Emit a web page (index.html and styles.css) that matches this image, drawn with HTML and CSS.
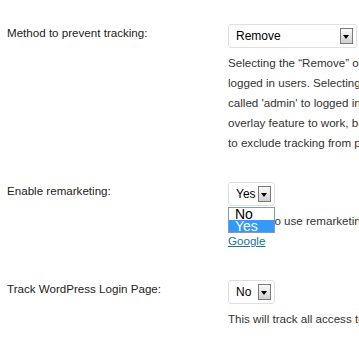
FILE: index.html
```html
<!DOCTYPE html>
<html lang="en">
  <head>
    <meta charset="UTF-8" />
    <meta name="viewport" content="width=device-width, initial-scale=1.0" />
    <title>Google Analyticator Settings</title>
    <link rel="stylesheet" href="styles.css">
  </head>
  <body>
    <div class="form-table">
      <div class="form-row">
        <div class="label">Method to prevent tracking:</div>
        <div class="field">
          <div class="select select-wide">
            <span class="value">Remove</span>
            <span class="arrow"></span>
          </div>
          <p class="description">
            Selecting the “Remove” option will physically remove the tracking code from<br>
            logged in users. Selecting the “Use 'admin' variable” option will assign a variable<br>
            called 'admin' to logged in users. This option will allow Google Analytics' site<br>
            overlay feature to work, but you will have to manually configure Google Analytics<br>
            to exclude tracking from pageviews with the 'admin' variable.
          </p>
        </div>
      </div>

      <div class="form-row">
        <div class="label">Enable remarketing:</div>
        <div class="field">
          <div class="select-wrap">
            <div class="select">
              <span class="value">Yes</span>
              <span class="arrow"></span>
            </div>
            <ul class="dropdown">
              <li>No</li>
              <li class="selected">Yes</li>
            </ul>
          </div>
          <p class="description">
            In order to use remarketing, <a href="#">please make sure you complete this checklist from<br>
            Google</a>
          </p>
        </div>
      </div>

      <div class="form-row">
        <div class="label">Track WordPress Login Page:</div>
        <div class="field">
          <div class="select">
            <span class="value">No</span>
            <span class="arrow"></span>
          </div>
          <p class="description">
            This will track all access to wp-login.php separately from other pages.
          </p>
        </div>
      </div>
    </div>
  </body>
</html>
```

FILE: styles.css
```css
body {
  margin: 0;
  background-color: #fff;
  color: #333;
  font-family: "Liberation Sans", Arial, sans-serif;
  font-size: 11.6px;
  overflow: hidden;
}
.form-table {
  width: 800px;
  padding-top: 24px;
}
.form-row {
  display: grid;
  grid-template-columns: 221px 1fr;
  padding-left: 7px;
  margin-bottom: 29px;
}
.label {
  color: #222;
  line-height: 16px;
  margin-top: 1px;
}
.select-wrap {
  position: relative;
  width: 47px;
}
.select {
  display: flex;
  align-items: center;
  box-sizing: border-box;
  width: 47px;
  height: 24px;
  padding: 0 3px 0 7px;
  border: 1px solid #dfdfdf;
  border-radius: 3px;
  background-color: #fff;
  color: #000;
  font-size: 12px;
}
.select-wide {
  width: 129px;
}
.select .value {
  flex: 1;
}
.arrow {
  position: relative;
  box-sizing: border-box;
  width: 13px;
  height: 16px;
  border: 1px solid #7a7a7a;
  background: linear-gradient(#fafafa, #d0d0d0);
}
.arrow::after {
  content: "";
  position: absolute;
  left: 2px;
  top: 6px;
  border-left: 3.5px solid transparent;
  border-right: 3.5px solid transparent;
  border-top: 4px solid #000;
}
.dropdown {
  position: absolute;
  top: 100%;
  left: 0;
  z-index: 2;
  box-sizing: border-box;
  width: 47px;
  margin: 1px 0 0;
  padding: 0;
  list-style: none;
  border: 1px solid #7f9db9;
  background-color: #fff;
  color: #000;
  font-size: 14px;
  line-height: 12px;
}
.dropdown li {
  padding: 0 0 0 6px;
}
.dropdown .selected {
  background-color: #3399ff;
  color: #fff;
}
.description {
  margin: 5px 0 0;
  line-height: 20px;
}
.description a {
  color: #21759b;
}
```
